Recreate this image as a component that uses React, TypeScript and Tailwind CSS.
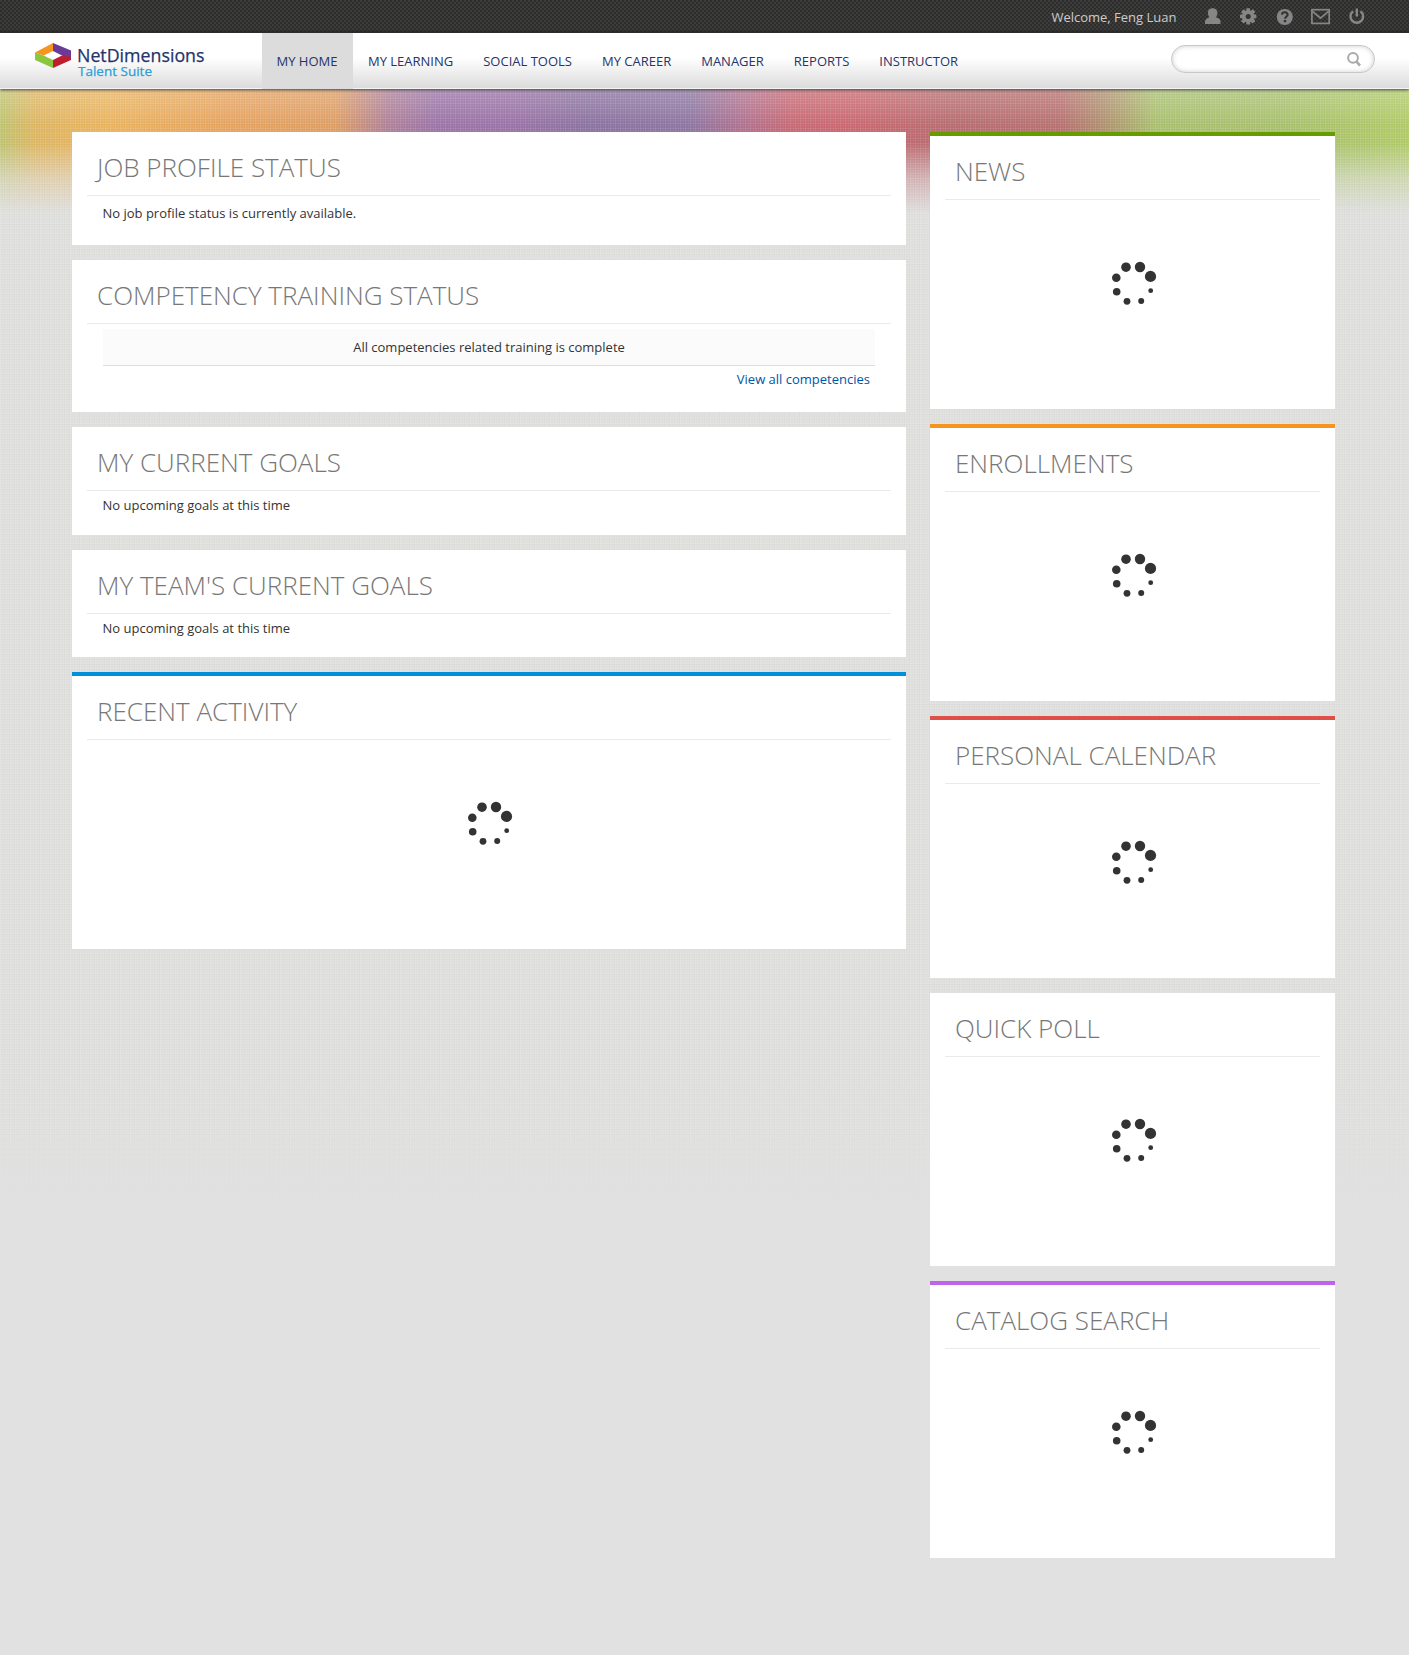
import React from "react";

const DOTS = [
  [36, 27.2, 4.8],
  [50, 27, 5.2],
  [60.5, 36.4, 5.6],
  [60.7, 50.7, 2.4],
  [51.2, 61, 3],
  [37, 61.3, 3.4],
  [26.7, 51.7, 3.8],
  [26.3, 37.7, 4.3],
];

function Spinner({ className }: { className: string }) {
  return (
    <svg className={`block h-12 w-12 ${className}`} viewBox="20 20 48 48" fill="#333">
      {DOTS.map(([cx, cy, r], i) => (
        <circle key={i} cx={cx} cy={cy} r={r} />
      ))}
    </svg>
  );
}

type CardProps = { title: string; className: string; accent?: string; children?: React.ReactNode };

function Card({ title, className, accent, children }: CardProps) {
  return (
    <section className={`bg-white px-[15px] ${accent ? `border-t-4 ${accent}` : ""} ${className}`}>
      <h2 className="h-16 border-b border-[#eaeaea] pl-[10px] pt-[17px] text-[26px] font-light leading-[36px] text-[#777]">
        {title}
      </h2>
      {children}
    </section>
  );
}

function Logo() {
  return (
    <svg className="block h-9 w-[172px]" viewBox="0 0 172 36">
      <path d="M0 10.500 18 1v8L8.500 13.500 0 10.500z" fill="#f7941e" />
      <path d="M18 1l18 7.500V17l-9-3.500L18 9z" fill="#6b3a97" />
      <path d="M36 15v3L18 26v-8l9-4.500z" fill="#be1e2d" />
      <path d="M0 10.500 8.500 13.500 18 18v8L0 18z" fill="#8cc63f" />
      <text x="42" y="19.500" fontSize="18" fill="#25346a" stroke="#25346a" strokeWidth=".25" textLength="127.500" lengthAdjust="spacingAndGlyphs">
        NetDimensions
      </text>
      <text x="43" y="33.500" fontSize="13.500" fill="#2a9fd8" stroke="#2a9fd8" strokeWidth=".25" textLength="74" lengthAdjust="spacingAndGlyphs">
        Talent Suite
      </text>
    </svg>
  );
}

function TopIcons() {
  return (
    <svg className="block h-[33px] w-[170px]" viewBox="1200 0 170 33" fill="#868686">
      <path d="M1212.600 8.300c3.300 0 5 2.200 4.800 5-.1 1.700-.8 3.200-1.600 4 .6.500 2.200.7 3.300 1.400 1 .7 1.400 2 1.400 3.400v2H1205v-2c0-1.400.4-2.700 1.400-3.400 1.100-.7 2.500-.9 3.100-1.400-.8-.8-1.500-2.300-1.600-4-.2-2.800 1.400-5 4.700-5z" />
      <g>
        {[0, 45, 90, 135].map((a) => (
          <rect key={a} x="1246.300" y="8.200" width="3.800" height="16.400" rx=".5" transform={`rotate(${a} 1248.200 16.400)`} />
        ))}
        <circle cx="1248.200" cy="16.400" r="6.200" />
        <circle cx="1248.200" cy="16.400" r="2.500" fill="#333" />
      </g>
      <circle cx="1284.800" cy="17" r="8" />
      <path d="M1281.900 14.700c.3-3.400 6-3.100 5.700.1-.2 1.900-2.600 2-2.600 4" fill="none" stroke="#333" strokeWidth="2.100" />
      <rect x="1283.800" y="20" width="2.400" height="2.200" fill="#333" />
      <g fill="none" stroke="#868686" strokeWidth="1.700">
        <rect x="1311.900" y="9.700" width="17.300" height="13.700" />
        <path d="M1312.300 11.200l8.200 7 8.300-7" />
      </g>
      <g fill="none" stroke="#868686" strokeWidth="2.400">
        <path d="M1353.200 11.300a6.300 6.300 0 1 0 7.200 0M1356.800 8.500v8" />
      </g>
    </svg>
  );
}

const NAV = ["MY LEARNING", "SOCIAL TOOLS", "MY CAREER", "MANAGER", "REPORTS", "INSTRUCTOR"];

export default function App() {
  return (
    <div className="flex min-h-[1655px] w-[1409px] flex-col bg-[#e1e1e1] font-['Open_Sans',sans-serif] text-[13px] text-[#333]">
      <div className="flex h-[33px] items-center justify-end bg-[#363636] bg-[conic-gradient(#2d2d2d_25%,#3c3c3b_0_50%,#2d2d2d_0_75%,#3c3c3b_0)] bg-[length:4px_4px] pr-[39px] shadow-[inset_0_-3px_2px_-1px_#282828]">
        <span className="mr-[23.500px] pt-0.5 text-[#ccc]">Welcome, Feng Luan</span>
        <TopIcons />
      </div>
      <header className="relative flex h-14 items-start border-b border-b-[#f4f4f4] bg-gradient-to-b from-white from-45% to-[#dcdcdc] pl-[35px] pr-[34px] text-[#25346a] shadow-[0_1px_3px_#444]">
        <div className="w-[227px] pt-[9px]">
          <Logo />
        </div>
        <nav className="flex">
          <a className="h-14 bg-[#dcdcdc] pl-[14.500px] pr-[15.500px] leading-[56px]">MY HOME</a>
          {NAV.map((n) => (
            <a key={n} className="px-[15px] leading-[56px]">
              {n}
            </a>
          ))}
        </nav>
        <div className="ml-auto mt-3 flex h-7 w-[204px] items-center justify-end rounded-full border border-[#c8c8c8] bg-white pr-[12.500px] shadow-[inset_0_0_5px_#ccc]">
          <svg className="h-4 w-4" viewBox="0 0 16 16" fill="none" stroke="#aaa" strokeWidth="2">
            <circle cx="7" cy="6.800" r="4.900" />
            <path d="M10 10l4 4.700" strokeWidth="2.600" />
          </svg>
        </div>
      </header>
      <main className="flex flex-1 items-start gap-6 bg-[linear-gradient(#e1e1e100_980px,#e1e1e1_1140px),repeating-linear-gradient(90deg,#ffffff18_0_1px,transparent_1px_3px,#ffffff0c_3px_4px,#00000004_4px_5px),repeating-linear-gradient(0deg,#ffffff18_0_1px,transparent_1px_3px,#ffffff0c_3px_4px,#00000004_4px_5px),linear-gradient(#ffffff34,#ffffff00_36px,#e0e0df00_54px,#e0e0dfa0_90px,#dfdfde_124px),linear-gradient(90deg,#bfc470,#dfb763_35px,#ebb45f_110px,#e7a460_230px,#df9f65_335px,#b08199_388px,#9c75a8_436px,#9a73a7_510px,#8c73a1_590px,#8e76a2_690px,#b1728f_743px,#c76a75_790px,#cb6870_850px,#b76d70_950px,#b87170_1060px,#b18e70_1100px,#abc070_1155px,#a8c16e_1280px,#b2cb68)] bg-[length:100%_1140px,100%_1140px,100%_1140px,100%_1140px,100%_124px] bg-no-repeat pl-[72px] pt-[43px]">
        <div className="flex w-[834px] flex-col gap-[15px]">
          <Card title="JOB PROFILE STATUS" className="h-[113px]">
            <p className="pl-[15.500px] pt-[7px] leading-5">No job profile status is currently available.</p>
          </Card>
          <Card title="COMPETENCY TRAINING STATUS" className="h-[152px]">
            <div className="ml-4 mr-4 mt-[5px] h-[37px] border-b border-[#ddd] bg-[#fbfbfb] text-center leading-9">
              All competencies related training is complete
            </div>
            <p className="pr-[21px] pt-[3px] text-right leading-5 text-[#0055a6]">View all competencies</p>
          </Card>
          <Card title="MY CURRENT GOALS" className="h-[108px]">
            <p className="pl-[15.500px] pt-1 leading-5">No upcoming goals at this time</p>
          </Card>
          <Card title="MY TEAM'S CURRENT GOALS" className="h-[107px]">
            <p className="pl-[15.500px] pt-1 leading-5">No upcoming goals at this time</p>
          </Card>
          <Card title="RECENT ACTIVITY" className="h-[277px]" accent="border-t-[#008fd9]">
            <Spinner className="ml-[379px] mt-[60px]" />
          </Card>
        </div>
        <div className="flex w-[405px] flex-col gap-[15px]">
          <Card title="NEWS" className="h-[277px]" accent="border-t-[#669c00]">
            <Spinner className="ml-[165px] mt-[60px]" />
          </Card>
          <Card title="ENROLLMENTS" className="h-[277px]" accent="border-t-[#f7941e]">
            <Spinner className="ml-[165px] mt-[60px]" />
          </Card>
          <Card title="PERSONAL CALENDAR" className="h-[262px]" accent="border-t-[#de4f47]">
            <Spinner className="ml-[165px] mt-[55px]" />
          </Card>
          <Card title="QUICK POLL" className="h-[273px]">
            <Spinner className="ml-[165px] mt-[60px]" />
          </Card>
          <Card title="CATALOG SEARCH" className="h-[277px]" accent="border-t-[#be63ea]">
            <Spinner className="ml-[165px] mt-[60px]" />
          </Card>
        </div>
      </main>
    </div>
  );
}
